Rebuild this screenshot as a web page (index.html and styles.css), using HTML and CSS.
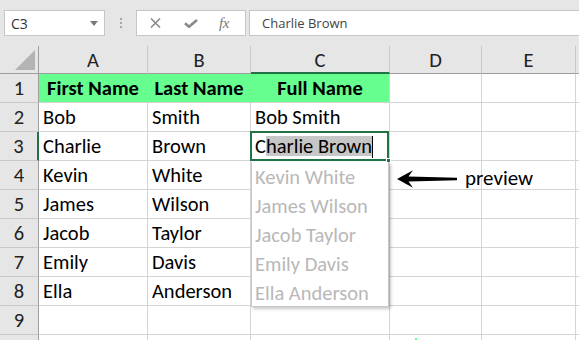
FILE: index.html
```html
<!DOCTYPE html>
<html>
<head>
<meta charset="utf-8">
<link rel="stylesheet" href="styles.css">
</head>
<body>
<div class="app">
  <div class="toolbar">
    <div class="namebox">
      <span class="nb-text">C3</span>
      <svg class="nb-caret" width="8" height="5" viewBox="0 0 8 5"><path d="M0 0H8L4 5Z" fill="#7a7a7a"/></svg>
    </div>
    <div class="grip"><i></i><i></i><i></i></div>
    <div class="fbtns">
      <svg class="ic-x" width="11" height="10" viewBox="0 0 11 10"><path d="M1 0.5L10 9.5M10 0.5L1 9.5" stroke="#8a8a8a" stroke-width="1.6" fill="none"/></svg>
      <svg class="ic-ok" width="14" height="9" viewBox="0 0 14 9"><path d="M1 4.2L5 7.8L13 1" stroke="#8a8a8a" stroke-width="2.6" fill="none"/></svg>
      <span class="ic-fx">fx</span>
    </div>
    <div class="finput">Charlie Brown</div>
  </div>

  <div class="sheet">
    <div class="ch corner"><span class="tri"></span></div>
    <div class="ch">A</div>
    <div class="ch">B</div>
    <div class="ch sel">C</div>
    <div class="ch">D</div>
    <div class="ch">E</div>
    <div class="ch last"></div>

    <div class="rh">1</div>
    <div class="cell hdr">First Name</div>
    <div class="cell hdr">Last Name</div>
    <div class="cell hdr hdr-end">Full Name</div>
    <div class="cell"></div>
    <div class="cell"></div>
    <div class="cell"></div>

    <div class="rh">2</div>
    <div class="cell">Bob</div>
    <div class="cell">Smith</div>
    <div class="cell">Bob Smith</div>
    <div class="cell"></div>
    <div class="cell"></div>
    <div class="cell"></div>

    <div class="rh sel">3</div>
    <div class="cell">Charlie</div>
    <div class="cell">Brown</div>
    <div class="cell active">
      <span class="edit">C<span class="hl">harlie Brown</span><span class="caret"></span></span>
      <span class="selbox"></span>
      <span class="handle"></span>
      <div class="preview">
        <div class="pv">Kevin White</div>
        <div class="pv">James Wilson</div>
        <div class="pv">Jacob Taylor</div>
        <div class="pv">Emily Davis</div>
        <div class="pv">Ella Anderson</div>
      </div>
    </div>
    <div class="cell"></div>
    <div class="cell"></div>
    <div class="cell"></div>

    <div class="rh">4</div>
    <div class="cell">Kevin</div>
    <div class="cell">White</div>
    <div class="cell"></div>
    <div class="cell"></div>
    <div class="cell"></div>
    <div class="cell"></div>

    <div class="rh">5</div>
    <div class="cell">James</div>
    <div class="cell">Wilson</div>
    <div class="cell"></div>
    <div class="cell"></div>
    <div class="cell"></div>
    <div class="cell"></div>

    <div class="rh">6</div>
    <div class="cell">Jacob</div>
    <div class="cell">Taylor</div>
    <div class="cell"></div>
    <div class="cell"></div>
    <div class="cell"></div>
    <div class="cell"></div>

    <div class="rh">7</div>
    <div class="cell">Emily</div>
    <div class="cell">Davis</div>
    <div class="cell"></div>
    <div class="cell"></div>
    <div class="cell"></div>
    <div class="cell"></div>

    <div class="rh">8</div>
    <div class="cell">Ella</div>
    <div class="cell">Anderson</div>
    <div class="cell"></div>
    <div class="cell"></div>
    <div class="cell"></div>
    <div class="cell"></div>

    <div class="rh">9</div>
    <div class="cell"></div>
    <div class="cell"></div>
    <div class="cell"></div>
    <div class="cell"></div>
    <div class="cell"></div>
    <div class="cell"></div>

    <div class="rh"></div>
    <div class="cell"></div>
    <div class="cell"></div>
    <div class="cell"></div>
    <div class="cell"></div>
    <div class="cell"></div>
    <div class="cell"></div>
  </div>

  <div class="note">
    <svg class="arrow" width="62" height="20" viewBox="0 0 62 20"><path d="M1 10L17 1.2L12.5 7.4L61 8.8V11.2L12.5 12.6L17 18.8Z" fill="#000"/></svg>
    <span class="note-text">preview</span>
  </div>
  <span class="speck"></span>
</div>
</body>
</html>
```

FILE: styles.css
```css
* { box-sizing: border-box; }
html, body { margin: 0; padding: 0; }
body {
  width: 579px;
  height: 340px;
  overflow: hidden;
  background: #ffffff;
  font-family: "Carlito", "Lato", "Liberation Sans", sans-serif;
}
.app {
  position: relative;
  width: 579px;
  height: 340px;
  overflow: hidden;
}

/* ---------- toolbar ---------- */
.toolbar {
  height: 46px;
  background: #e6e6e6;
  display: flex;
  align-items: flex-start;
  padding: 10px 0 0 4px;
  font-family: "Open Sans", "Noto Sans", sans-serif;
}
.namebox {
  width: 101px;
  height: 26px;
  background: #fff;
  border: 1px solid #c6c6c6;
  display: flex;
  align-items: center;
  justify-content: space-between;
  padding: 0 6px 0 6px;
}
.nb-text { font-size: 14px; color: #333; }
.nb-caret { margin-top: 1px; }
.grip {
  width: 31px;
  height: 26px;
  display: flex;
  flex-direction: column;
  align-items: center;
  justify-content: center;
  gap: 2px;
}
.grip i {
  display: block;
  width: 2px;
  height: 2px;
  background: #a6a6a6;
}
.fbtns {
  width: 110px;
  height: 26px;
  background: #fff;
  border: 1px solid #c6c6c6;
  display: flex;
  align-items: center;
  padding: 0 0 0 13px;
}
.ic-x { margin-right: 23px; }
.ic-ok { margin-right: 21px; margin-top: 1px; }
.ic-fx {
  font-family: "Liberation Serif", serif;
  font-style: italic;
  font-size: 15px;
  color: #7a7a7a;
  letter-spacing: -0.5px;
}
.finput {
  flex: 1;
  height: 26px;
  margin-left: 3px;
  margin-right: -2px;
  background: #fff;
  border: 1px solid #c6c6c6;
  display: flex;
  align-items: center;
  padding-left: 12px;
  font-size: 13px;
  color: #444;
}

/* ---------- sheet grid ---------- */
.sheet {
  display: grid;
  grid-template-columns: 39px 109px 103px 139px 92px 94px 1fr;
  grid-template-rows: 28px repeat(9, 29px) 29px;
  font-size: 20.5px;
  color: #000;
}
.ch, .rh {
  background: #e6e6e6;
  color: #222;
}
.ch {
  border-right: 1px solid #c8c8c8;
  border-bottom: 1px solid #9e9e9e;
  display: flex;
  align-items: center;
  justify-content: center;
  padding-top: 1px;
}
.ch.sel { border-bottom: 2px solid #217346; padding-top: 2px; }
.ch.last { border-right: none; }
.corner {
  justify-content: flex-end;
  align-items: flex-end;
  padding: 0 3px 3px 0;
  border-right-color: #9e9e9e;
}
.tri {
  display: block;
  width: 20px;
  height: 20px;
  background: #b4b4b4;
  clip-path: polygon(100% 0, 100% 100%, 0 100%);
}
.rh {
  border-right: 1px solid #9e9e9e;
  border-bottom: 1px solid #c8c8c8;
  display: flex;
  align-items: flex-end;
  justify-content: center;
  padding-bottom: 4px;
  line-height: 1;
}
.rh.sel { border-right: 2px solid #217346; }

.cell {
  border-right: 1px solid #d4d4d4;
  border-bottom: 1px solid #d4d4d4;
  display: flex;
  align-items: flex-end;
  padding: 0 4px 4px 4px;
  line-height: 1;
  white-space: nowrap;
}
.hdr {
  background: #66ff8f;
  border-right-color: #66ff8f;
  font-weight: bold;
  justify-content: center;
  padding-left: 0;
  padding-right: 0;
}
.hdr-end { border-right-color: #d4d4d4; }

/* active edited cell */
.active { position: relative; }
.edit { position: relative; display: inline-flex; align-items: flex-end; }
.hl { background: #c6c6c6; }
.caret {
  display: inline-block;
  width: 1px;
  height: 22px;
  margin-bottom: -2px;
  background: #000;
}
.selbox {
  position: absolute;
  left: -1px;
  top: -1px;
  right: 0;
  bottom: -1px;
  border: 2px solid #217346;
  pointer-events: none;
}
.handle {
  position: absolute;
  right: -2px;
  bottom: -3px;
  width: 5px;
  height: 5px;
  background: #217346;
  border: 1px solid #fff;
}
.preview {
  position: absolute;
  left: 0;
  top: 30px;
  width: 138px;
  background: #fff;
  border: 1px solid #c8c8c8;
  border-top: none;
  box-shadow: 2px 2px 3px rgba(0, 0, 0, 0.22);
  z-index: 2;
}
.pv {
  height: 29px;
  display: flex;
  align-items: flex-end;
  padding: 0 3px 4px 3px;
  line-height: 1;
  color: #b8b8b8;
}
.pv:last-child { height: 28px; padding-bottom: 3px; }

/* annotation */
.note {
  position: absolute;
  left: 396px;
  top: 166px;
  display: flex;
  align-items: center;
  gap: 7px;
}
.arrow { display: block; margin-top: 2px; }
.note-text {
  font-size: 21px;
  line-height: 24px;
  color: #000;
}
.speck {
  position: absolute;
  left: 415px;
  top: 338px;
  width: 2px;
  height: 2px;
  background: #66ff8f;
}
```
